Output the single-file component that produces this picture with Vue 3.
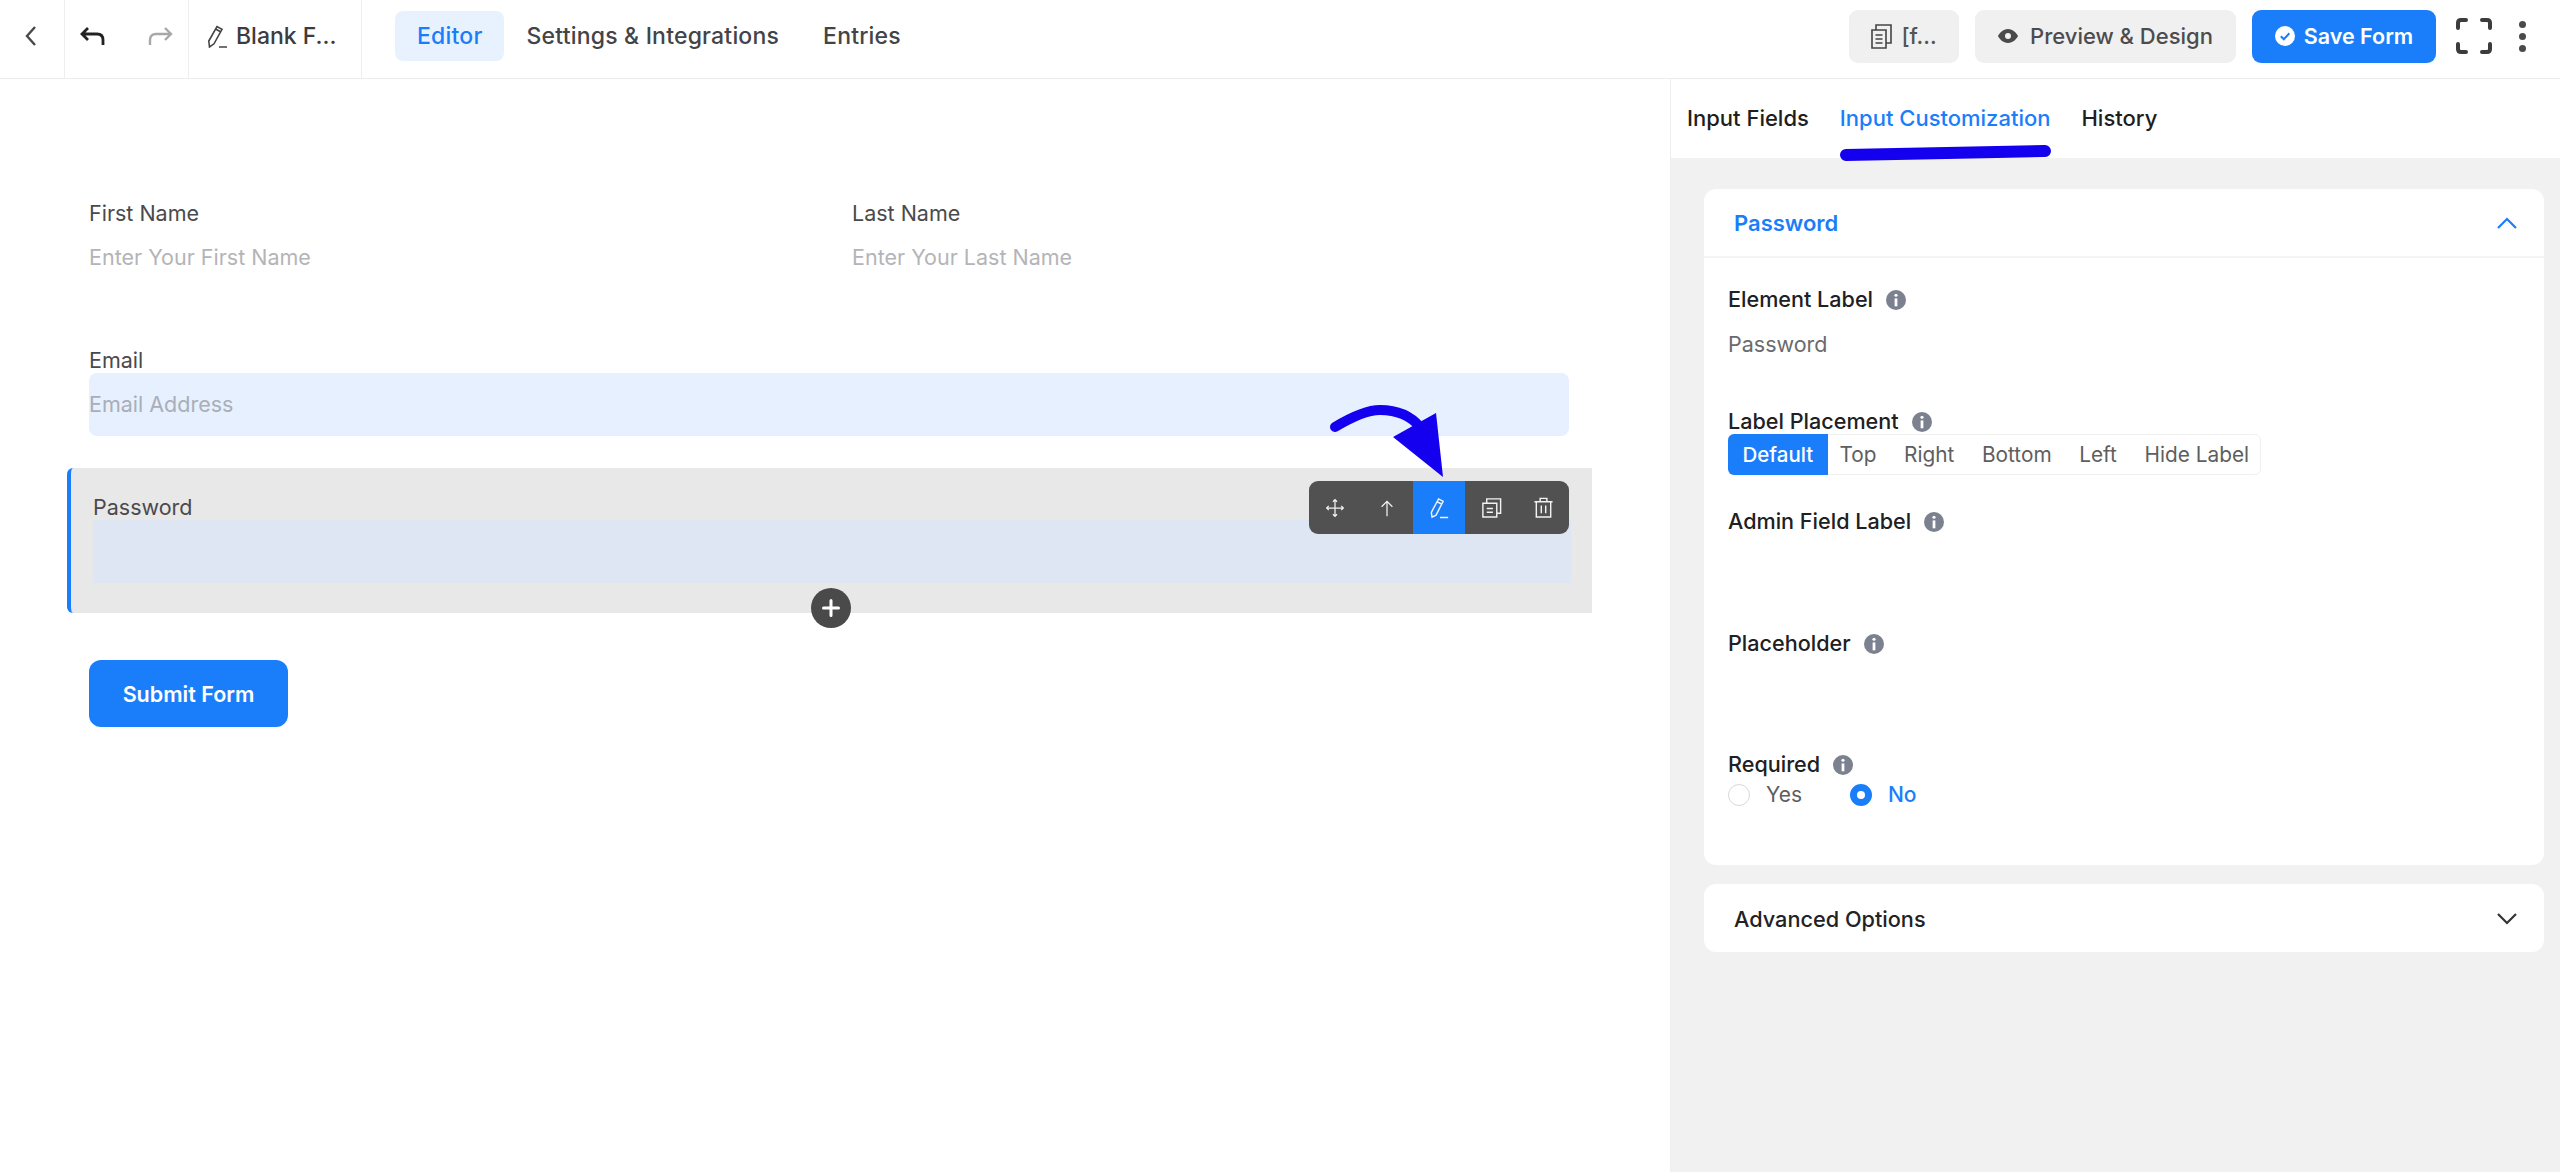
<template>
  <div class="app">
    <header class="topbar">
      <div class="tool tool-back">
        <svg class="ic" width="14" height="22" viewBox="0 0 14 22"><path d="M11 2 3 11l8 9" /></svg>
      </div>
      <div class="tool tool-history">
        <svg class="ic dark" width="26" height="20" viewBox="0 0 26 20"><path d="M8 2 2 8l6 6M2 8h15q6 0 6 6v5" /></svg>
        <svg class="ic faint" width="26" height="20" viewBox="0 0 26 20"><path d="M18 2l6 6-6 6M24 8H9q-6 0-6 6v5" /></svg>
      </div>
      <div class="tool tool-title">
        <svg class="ic thin" width="24" height="24" viewBox="0 0 24 24"><path d="M3.500 23 2.800 17 11 2.500l5 2.800L8 19.800ZM9.500 5l5 2.800M13 23h8" /></svg>
        <span>Blank F...</span>
      </div>
      <nav class="nav">
        <a v-for="item in nav" :key="item" class="nav-item" :class="{ active: item === 'Editor' }">{{ item }}</a>
      </nav>
      <div class="actions">
        <button class="btn btn-code">
          <svg class="ic thin" width="21" height="26" viewBox="0 0 21 26"><path d="M1 7h14v18H1zM5 7V2h15v18h-5M4.500 12h7M4.500 16h7M4.500 20h7" /></svg>
          <span>[f...</span>
        </button>
        <button class="btn btn-preview">
          <svg width="20" height="16" viewBox="0 0 20 16"><path fill="#4a4a4a" fill-rule="evenodd" d="M10 1c5 0 8.500 4 10 7-1.500 3-5 7-10 7S1.500 11 0 8c1.500-3 5-7 10-7Zm0 4a3 3 0 1 0 0 6 3 3 0 0 0 0-6Z" /></svg>
          <span>Preview &amp; Design</span>
        </button>
        <button class="btn btn-save">
          <svg width="20" height="20" viewBox="0 0 20 20"><circle cx="10" cy="10" r="10" fill="#fff" /><path d="m5.800 10.300 3 3 5.500-6" fill="none" stroke="#1a7efb" stroke-width="2" /></svg>
          <span>Save Form</span>
        </button>
        <svg class="fullscreen" width="36" height="36" viewBox="0 0 36 36"><path d="M2 10V5q0-3 3-3h5M26 2h5q3 0 3 3v5M34 26v5q0 3-3 3h-5M10 34H5q-3 0-3-3v-5" /></svg>
        <span class="dots"><i></i><i></i><i></i></span>
      </div>
    </header>

    <main class="workspace">
      <section class="canvas">
        <div class="row-two">
          <div class="field">
            <label>First Name</label>
            <div class="input">Enter Your First Name</div>
          </div>
          <div class="field">
            <label>Last Name</label>
            <div class="input">Enter Your Last Name</div>
          </div>
        </div>
        <div class="field field-email">
          <label>Email</label>
          <div class="input filled">Email Address</div>
        </div>
        <div class="selected">
          <div class="field">
            <label>Password</label>
            <div class="input filled dim"></div>
          </div>
          <div class="toolbar">
            <span class="tb-cell"><svg width="24" height="24" viewBox="0 0 24 24"><path d="M12 2v20M2 12h20M9.500 4.500 12 2l2.500 2.500M9.500 19.500 12 22l2.500-2.500M4.500 9.500 2 12l2.500 2.500M19.500 9.500 22 12l-2.500 2.500" /></svg></span>
            <span class="tb-cell"><svg width="24" height="24" viewBox="0 0 24 24"><path d="M12 22V4M5.500 10.500 12 4l6.500 6.500" /></svg></span>
            <span class="tb-cell on"><svg width="24" height="24" viewBox="0 0 24 24"><path d="M4.200 22 3.500 17 11 3l4.800 2.600L8.400 20ZM9.500 6l4.800 2.600M12.500 22.500H21" /></svg></span>
            <span class="tb-cell big"><svg width="24" height="24" viewBox="0 0 24 24"><path d="M3 7.500h14.500V22H3zM7 7.500V3h14.500v15H17.500M7 13h6.500M7 17h6.500" /></svg></span>
            <span class="tb-cell big"><svg width="24" height="24" viewBox="0 0 24 24"><path d="M2.500 6h19M8.500 6V2.500h7V6M4.500 6v16h15V6M9.700 10v8M14.300 10v8" /></svg></span>
          </div>
          <span class="add"><svg width="20" height="20" viewBox="0 0 20 20"><path d="M10 2.500v15M2.500 10h15" /></svg></span>
        </div>
        <button class="submit">Submit Form</button>
      </section>

      <aside class="panel">
        <div class="tabs">
          <a v-for="t in tabs" :key="t" class="tab" :class="{ active: t === 'Input Customization' }">{{ t }}</a>
          <svg class="scribble" width="224" height="24" viewBox="0 0 224 24"><path d="M7 14 C 70 13 140 11 206 10" /></svg>
        </div>
        <div class="panel-body">
          <div class="card">
            <div class="card-head blue">
              <span>Password</span>
              <svg class="chev" width="22" height="12" viewBox="0 0 22 12"><path d="M2 11 11 2l9 9" /></svg>
            </div>
            <div class="card-body">
              <div class="lbl">Element Label <svg class="info" width="20" height="20" viewBox="0 0 19 19"><circle cx="9.500" cy="9.500" r="9.500" /><circle class="w" cx="9.500" cy="5" r="1.500" /><rect class="w" x="8.200" y="8" width="2.600" height="7.500" /></svg></div>
              <div class="value">Password</div>
              <div class="lbl lbl-place">Label Placement <svg class="info" width="20" height="20" viewBox="0 0 19 19"><circle cx="9.500" cy="9.500" r="9.500" /><circle class="w" cx="9.500" cy="5" r="1.500" /><rect class="w" x="8.200" y="8" width="2.600" height="7.500" /></svg></div>
              <div class="segmented">
                <span v-for="s in placements" :key="s" class="seg" :class="{ on: s === 'Default' }">{{ s }}</span>
              </div>
              <div class="lbl lbl-admin">Admin Field Label <svg class="info" width="20" height="20" viewBox="0 0 19 19"><circle cx="9.500" cy="9.500" r="9.500" /><circle class="w" cx="9.500" cy="5" r="1.500" /><rect class="w" x="8.200" y="8" width="2.600" height="7.500" /></svg></div>
              <div class="lbl lbl-ph">Placeholder <svg class="info" width="20" height="20" viewBox="0 0 19 19"><circle cx="9.500" cy="9.500" r="9.500" /><circle class="w" cx="9.500" cy="5" r="1.500" /><rect class="w" x="8.200" y="8" width="2.600" height="7.500" /></svg></div>
              <div class="lbl lbl-req">Required <svg class="info" width="20" height="20" viewBox="0 0 19 19"><circle cx="9.500" cy="9.500" r="9.500" /><circle class="w" cx="9.500" cy="5" r="1.500" /><rect class="w" x="8.200" y="8" width="2.600" height="7.500" /></svg></div>
              <div class="radios">
                <span class="radio"><i></i>Yes</span>
                <span class="radio on"><i></i>No</span>
              </div>
            </div>
          </div>
          <div class="card card-adv">
            <div class="card-head">
              <span>Advanced Options</span>
              <svg class="chev dark" width="22" height="12" viewBox="0 0 22 12"><path d="M2 1l9 9 9-9" /></svg>
            </div>
          </div>
        </div>
      </aside>
    </main>

    <svg class="pointer" width="125" height="90" viewBox="0 0 125 90">
      <path d="M10 32 C 30 20 45 15 55 15 C 72 15 85 20 95 32" />
      <polygon points="111,18 68,42 118,82" />
    </svg>
  </div>
</template>

<script setup>
const nav = ['Editor', 'Settings & Integrations', 'Entries']
const tabs = ['Input Fields', 'Input Customization', 'History']
const placements = ['Default', 'Top', 'Right', 'Bottom', 'Left', 'Hide Label']
</script>

<style>
html, body { margin: 0; background: #fff; overflow: hidden; }
</style>

<style scoped>
.app {
  position: relative;
  width: 2560px;
  height: 1172px;
  overflow: hidden;
  font-family: Inter, "Liberation Sans", sans-serif;
  color: #353537;
  background: #fff;
}
.topbar {
  display: flex;
  align-items: stretch;
  height: 78px;
  border-bottom: 1px solid #ececec;
  box-sizing: content-box;
}
.ic { fill: none; stroke: #4a4a4a; stroke-width: 2.400; }
.ic.dark { stroke: #222; stroke-width: 2.800; }
.ic.faint { stroke: #a8a8a8; stroke-width: 2.400; }
.ic.thin { stroke: #444; stroke-width: 1.600; }
.tool { display: flex; align-items: center; box-sizing: border-box; border-right: 1px solid #eeeeee; padding-bottom: 6px; }
.tool-back { width: 65px; padding-left: 24px; }
.tool-history { width: 124px; padding-left: 15px; gap: 41px; }
.tool-title { width: 173px; padding-left: 17px; gap: 6px; font-size: 23px; font-weight: 500; color: #3c3c3e; }
.nav { display: flex; align-items: center; margin-left: 33px; padding-bottom: 7px; }
.nav-item { font-size: 23px; letter-spacing: 0.200px; font-weight: 500; color: #444446; padding: 0 22px; height: 50px; line-height: 50px; border-radius: 8px; }
.nav-item.active { background: #e8f2ff; color: #1a7efb; }
.actions { display: flex; align-items: center; margin-left: auto; padding-bottom: 6px; }
.btn {
  display: flex; align-items: center; justify-content: center; gap: 12px;
  height: 53px; border: 0; border-radius: 9px; font-family: inherit;
  font-size: 22px; font-weight: 500;
}
.btn-code { width: 110px; background: #f0f0f0; color: #555; gap: 9px; }
.btn-preview { width: 261px; margin-left: 16px; background: #f0f0f0; color: #4c4c4e; }
.btn-save { width: 184px; margin-left: 16px; background: #1a7efb; color: #fff; gap: 9px; font-size: 21.500px; font-weight: 600; }
.fullscreen { margin-left: 20px; fill: none; stroke: #3c3c3c; stroke-width: 4; stroke-linecap: round; }
.dots { display: flex; flex-direction: column; gap: 5px; margin-left: 27px; margin-right: 34px; }
.dots i { display: block; width: 7px; height: 7px; border-radius: 50%; background: #4a4a4a; }

.workspace { display: flex; height: 1093px; }
.canvas { width: 1670px; box-sizing: border-box; padding: 121px 101px 0 89px; }
.row-two { display: grid; grid-template-columns: 1fr 1fr; gap: 46px; }
.field label { display: block; height: 26px; line-height: 26px; font-size: 21.500px; color: #4a4a4c; }
.input {
  height: 63px; line-height: 63px; border-radius: 8px; font-size: 21.500px; color: #b4b4b8;
  box-sizing: border-box;
}
.input.filled { background: #e6f0fe; color: #a9aeb8; }
.input.dim { background: #dee6f3; border-radius: 0; }
.field-email { margin-top: 58px; }
.selected {
  position: relative;
  margin: 32px -23px 0 -22px;
  padding: 26px 21px 30px 22px;
  background: #e8e8e8;
  border-left: 4px solid #1a7efb;
  border-radius: 6px 0 0 6px;
  box-sizing: border-box;
  height: 145px;
}
.toolbar {
  position: absolute; top: 13px; right: 23px;
  display: flex; height: 53px; width: 260px;
  background: #515151; border-radius: 9px; overflow: hidden;
}
.tb-cell { flex: 1; display: flex; align-items: center; justify-content: center; }
.tb-cell.on { background: #1a7efb; }
.tb-cell svg { fill: none; stroke: #f2f2f2; stroke-width: 1.500; width: 20px; height: 20px; }
.tb-cell.on svg, .tb-cell.big svg { width: 23px; height: 23px; }
.add {
  position: absolute; left: 740px; top: 120px;
  width: 40px; height: 40px; border-radius: 50%; background: #4a4a4a;
  display: flex; align-items: center; justify-content: center;
}
.add svg { fill: none; stroke: #fff; stroke-width: 3; stroke-linecap: round; }
.submit {
  display: block; margin-top: 47px; width: 199px; height: 67px;
  background: #1a7efb; color: #fff; border: 0; border-radius: 12px;
  font-family: inherit; font-size: 21.500px; font-weight: 600;
}

.panel { flex: 1; border-left: 1px solid #eeeeee; display: flex; flex-direction: column; }
.tabs { position: relative; height: 79px; display: flex; align-items: center; padding-left: 16px; gap: 31px; background: #fff; padding-bottom: 2px; box-sizing: border-box; }
.tab { font-size: 22px; font-weight: 500; color: #1e1e20; }
.tab.active { color: #1a7efb; }
.scribble { position: absolute; left: 168px; top: 62px; fill: none; stroke: #1400ee; stroke-width: 12; stroke-linecap: round; z-index: 2; overflow: visible; }
.panel-body { flex: 1; background: #f1f1f1; padding: 31px 16px 0 33px; }
.card { background: #fff; border-radius: 12px; }
.card-head {
  display: flex; align-items: center; justify-content: space-between;
  height: 69px; padding: 0 26px 0 30px; font-size: 22px; font-weight: 600; color: #222224;
  box-sizing: border-box;
}
.card-head.blue { color: #1a7efb; border-bottom: 2px solid #f4f4f4; }
.chev { fill: none; stroke: #1a7efb; stroke-width: 2.200; }
.chev.dark { stroke: #333; }
.card-body { padding: 28px 24px 0; height: 607px; box-sizing: border-box; }
.lbl { display: flex; align-items: center; gap: 13px; height: 26px; font-size: 21.600px; font-weight: 500; color: #202022; }
.info { margin-top: 2px; }
.info circle, .info { fill: #7c8190; }
.info .w { fill: #fff; }
.value { margin-top: 19px; height: 26px; line-height: 26px; font-size: 21.500px; color: #6a6a6c; }
.lbl-place { margin-top: 51px; }
.segmented {
  display: inline-flex; align-items: center; height: 41px; vertical-align: top;
  border: 1px solid #f0f0f0; border-radius: 6px; box-sizing: border-box; width: 533px;
}
.seg { font-size: 20.800px; color: #5e5e60; padding: 0 13.800px; line-height: 41px; white-space: nowrap; }
.seg.on { background: #1a7efb; color: #fff; border-radius: 6px 0 0 6px; height: 41px; margin: -1px -2px -1px -1px; padding: 0 14.500px; font-size: 20.500px; font-weight: 500; }
.lbl-admin { margin-top: 33px; }
.lbl-ph { margin-top: 96px; }
.lbl-req { margin-top: 95px; }
.radios { display: flex; gap: 48px; margin-top: 7px; }
.radio { display: flex; align-items: center; gap: 16px; font-size: 21px; color: #5e5e60; line-height: 22px; }
.radio i { display: block; width: 22px; height: 22px; box-sizing: border-box; border: 1px solid #d9d9d9; border-radius: 50%; background: #fff; }
.radio.on { color: #1a7efb; font-weight: 500; }
.radio.on i { border: 7px solid #1a7efb; }
.card-adv { margin-top: 19px; height: 68px; }
.card-adv .card-head { height: 68px; padding-top: 1px; font-size: 21.700px; font-weight: 500; }

.pointer { position: absolute; left: 1325px; top: 395px; z-index: 3; }
.pointer path { fill: none; stroke: #1400ee; stroke-width: 10; stroke-linecap: round; }
.pointer polygon { fill: #1400ee; }
</style>
